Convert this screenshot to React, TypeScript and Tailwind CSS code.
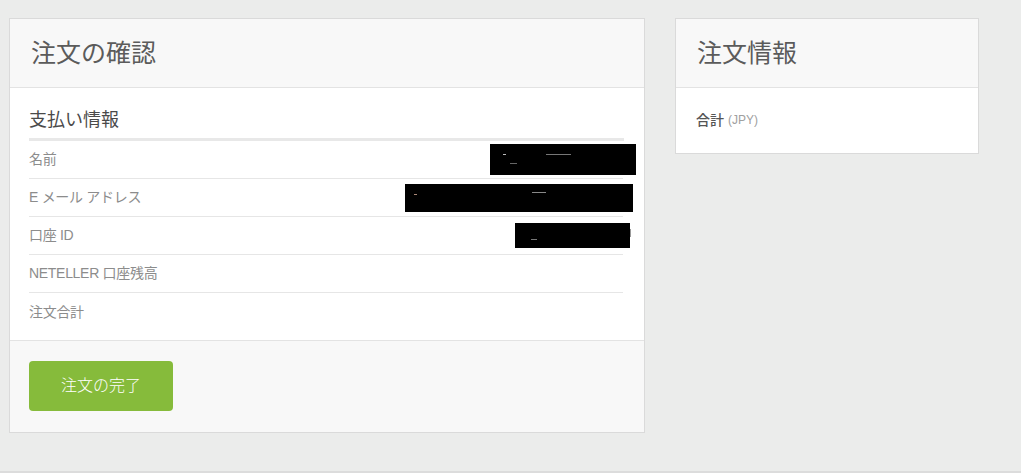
import React from "react";

const rows = ["名前", "E メール アドレス", "口座 ID", "NETELLER 口座残高", "注文合計"];

export default function App() {
  return (
    <div
      className="relative flex h-[473px] w-[1021px] flex-col overflow-hidden bg-[#ebeceb]"
      style={{ fontFamily: '"Liberation Sans", "Noto Sans CJK JP", sans-serif' }}
    >
      <div className="flex flex-1 items-start gap-[30px] pl-[9px] pt-[18px]">
        {/* Left card */}
        <div className="relative w-[636px] border border-[#dadada] bg-white">
          <div className="flex h-[69px] items-center border-b border-[#e3e3e3] bg-[#f8f8f8] px-[21px]">
            <h1 className="text-[25px] font-normal leading-none text-[#5b5b5b]">注文の確認</h1>
          </div>
          <div className="px-[19px] pb-[9px]">
            <div className="flex h-[50px] items-end pb-[9px]">
              <h2 className="text-[18px] leading-none text-[#4a4a4a]">支払い情報</h2>
            </div>
            <div className="mr-[1px] h-[3px] bg-[#e8e8e8]" />
            <div className="mr-[2px]">
              {rows.map((r, i) => (
                <div
                  key={r}
                  className={`flex h-[38px] items-center text-[14px] tracking-[-0.3px] text-[#8c8c8c] ${
                    i < rows.length - 1 ? "border-b border-[#e6e6e6]" : ""
                  }`}
                >
                  {r}
                </div>
              ))}
            </div>
          </div>
          <div className="border-t border-[#e3e3e3] bg-[#f8f8f8] px-[19px] pb-[21px] pt-[20px]">
            <button className="flex h-[50px] w-[144px] items-center justify-center rounded-[4px] bg-[#86bb3b] text-[16px] font-light text-white">
              注文の完了
            </button>
          </div>

          {/* redaction overlays */}
          <div className="absolute left-[480px] top-[125px] h-[31px] w-[146px] bg-black">
            <div className="absolute left-[13px] top-[10px] h-px w-[3px] bg-[#bbb]" />
            <div className="absolute left-[56px] top-[10px] h-px w-[25px] bg-[#777]" />
            <div className="absolute left-[20px] top-[19px] h-px w-[7px] bg-[#666]" />
          </div>
          <div className="absolute left-[395px] top-[165px] h-[28px] w-[228px] bg-black">
            <div className="absolute left-[9px] top-[10px] h-px w-[3px] bg-[#a87]" />
            <div className="absolute left-[127px] top-[8px] h-px w-[14px] bg-[#888]" />
          </div>
          <div className="absolute left-[505px] top-[204px] h-[25px] w-[115px] bg-black">
            <div className="absolute left-[16px] top-[16px] h-px w-[6px] bg-[#777]" />
          </div>
          <div className="absolute left-[620px] top-[210px] h-[8px] w-[1px] bg-[#999]" />
        </div>

        {/* Right card */}
        <div className="w-[304px] border border-[#dadada] bg-white">
          <div className="flex h-[69px] items-center border-b border-[#e3e3e3] bg-[#f8f8f8] px-[21px]">
            <h1 className="text-[25px] font-normal leading-none text-[#5b5b5b]">注文情報</h1>
          </div>
          <div className="flex h-[65px] items-center px-[20px] pb-[1px]">
            <span className="text-[14px] font-medium text-[#555]">合計</span>
            <span className="ml-[4px] text-[12px] text-[#a0a0a0]">(JPY)</span>
          </div>
        </div>
      </div>
      <div className="h-[2px] w-full bg-[#dcdcdc]" />
    </div>
  );
}
